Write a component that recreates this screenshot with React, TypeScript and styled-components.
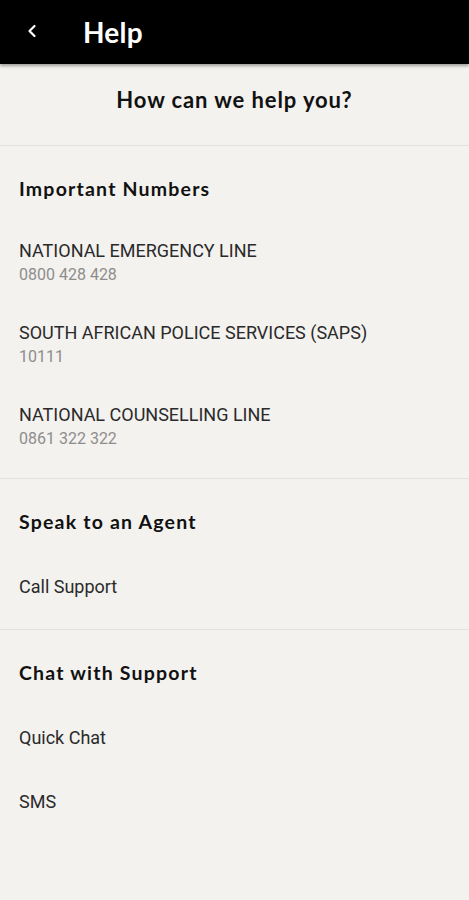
import React from 'react';
import styled, { createGlobalStyle } from 'styled-components';

const headingFont = `Lato, "Noto Sans", sans-serif`;
const bodyFont = `Roboto, "Liberation Sans", sans-serif`;

const GlobalStyle = createGlobalStyle`
    html, body {
        margin: 0;
        padding: 0;
        background: #f3f2ef;
    }
    * {
        box-sizing: border-box;
    }
`;

// ---------------- <Page /> ---------------

const Page = styled.div`
    min-height: 900px;
    background: #f3f2ef;
    display: flex;
    flex-direction: column;
`;

// ---------------- <TopBar /> ---------------

const TopBar = styled.header`
    height: 64px;
    background: #000000;
    display: flex;
    align-items: center;
    padding-left: 24px;
    box-shadow: 0 2px 3px rgba(0, 0, 0, 0.35);
    position: relative;
    z-index: 1;
`;

const BackButton = styled.button`
    width: 16px;
    height: 24px;
    padding: 0;
    border: none;
    background: none;
    display: flex;
    align-items: center;
    justify-content: center;
    margin-right: 43px;
    margin-top: -2px;
`;

const BarTitle = styled.h1`
    margin: 0;
    font-family: ${headingFont};
    font-weight: 700;
    font-size: 28px;
    color: #ffffff;
    line-height: 32px;
    margin-top: -1px;
    letter-spacing: 0.2px;
`;

// ---------------- <Intro /> ---------------

const Intro = styled.div`
    padding: 22px 16px 31px 16px;
    text-align: center;
    font-family: ${headingFont};
    font-weight: 700;
    font-size: 22px;
    letter-spacing: 0.9px;
    line-height: 28px;
    color: #111111;
    border-bottom: 1px solid #e2e1de;
`;

// ---------------- <Section /> ---------------

const Section = styled.section<{ $last?: boolean }>`
    padding: 30px 19px 11px 19px;
    border-bottom: ${p => (p.$last ? 'none' : '1px solid #e2e1de')};
`;

const SectionTitle = styled.h2`
    margin: 0 0 19px 0;
    font-family: ${headingFont};
    font-weight: 700;
    font-size: 19.5px;
    letter-spacing: 1.2px;
    line-height: 26px;
    color: #111111;
`;

const ItemList = styled.ul`
    list-style: none;
    margin: 0;
    padding: 0;
`;

const Item = styled.li<{ $double?: boolean }>`
    padding: ${p => (p.$double ? '18px 0 16px 0' : '21px 0 19px 0')};
    display: flex;
    flex-direction: column;
`;

const ItemLabel = styled.span`
    font-family: ${bodyFont};
    font-size: 18px;
    line-height: 24px;
    color: #2a2a2a;
`;

const ItemDetail = styled.span`
    font-family: ${bodyFont};
    font-size: 16px;
    line-height: 24px;
    color: #8e8d8b;
`;

const ChevronLeft = () => (
    <svg width="12" height="14" viewBox="0 0 12 14" fill="none">
        <path d="M8.5 2 L3.5 7 L8.5 12" stroke="#ffffff" strokeWidth="2.2" strokeLinecap="round" strokeLinejoin="round" />
    </svg>
);

type Entry = { label: string; detail?: string };

const sections: { title: string; items: Entry[] }[] = [
    {
        title: 'Important Numbers',
        items: [
            { label: 'NATIONAL EMERGENCY LINE', detail: '0800 428 428' },
            { label: 'SOUTH AFRICAN POLICE SERVICES (SAPS)', detail: '10111' },
            { label: 'NATIONAL COUNSELLING LINE', detail: '0861 322 322' },
        ],
    },
    {
        title: 'Speak to an Agent',
        items: [{ label: 'Call Support' }],
    },
    {
        title: 'Chat with Support',
        items: [{ label: 'Quick Chat' }, { label: 'SMS' }],
    },
];

export default function App() {
    return (
        <Page>
            <GlobalStyle />
            <TopBar>
                <BackButton aria-label="Back">
                    <ChevronLeft />
                </BackButton>
                <BarTitle>Help</BarTitle>
            </TopBar>
            <Intro>How can we help you?</Intro>
            {sections.map((s, i) => (
                <Section key={s.title} $last={i === sections.length - 1}>
                    <SectionTitle>{s.title}</SectionTitle>
                    <ItemList>
                        {s.items.map(it => (
                            <Item key={it.label} $double={!!it.detail}>
                                <ItemLabel>{it.label}</ItemLabel>
                                {it.detail && <ItemDetail>{it.detail}</ItemDetail>}
                            </Item>
                        ))}
                    </ItemList>
                </Section>
            ))}
        </Page>
    );
}
